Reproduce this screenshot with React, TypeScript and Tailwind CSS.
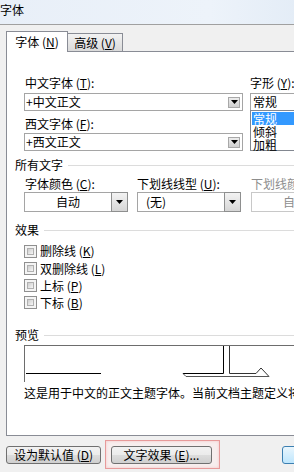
import type { ReactNode } from "react";

function Arrow({ color = "#000" }: { color?: string }) {
  return (
    <svg width="7" height="4" viewBox="0 0 7 4">
      <path d="M0 0h7L3.5 4z" fill={color} />
    </svg>
  );
}

function Label({ children, className = "" }: { children: ReactNode; className?: string }) {
  return <div className={"h-[16px] leading-[16px] whitespace-nowrap " + className}>{children}</div>;
}

function FontInput({ value, className = "" }: { value: string; className?: string }) {
  return (
    <div className={"flex h-[18px] items-center border border-[#a5a5a5] bg-white " + className}>
      <span className="flex-1 pl-[1px] leading-none">{value}</span>
      <div className="mr-[2px] flex h-[11px] w-[12px] items-center justify-center border border-[#a8a8a8] bg-[linear-gradient(#ececec,#cfcfcf)]">
        <Arrow />
      </div>
    </div>
  );
}

function Combo({ value, center, disabled }: { value: string; center?: boolean; disabled?: boolean }) {
  return (
    <div className="flex h-[20px]">
      <div
        className={
          "flex flex-1 items-center border border-r-0 bg-white leading-none " +
          (center ? "justify-center " : "pl-[8px] ") +
          (disabled ? "border-[#c8c8c8] text-[#8d8d8d]" : "border-[#a5a5a5]")
        }
      >
        {value}
      </div>
      <div
        className={
          "flex w-[17px] items-center justify-center border " +
          (disabled
            ? "border-[#c8c8c8] bg-[#f4f4f4]"
            : "border-[#8e8f8f] bg-[linear-gradient(#f3f3f3,#d6d6d6)]")
        }
      >
        <Arrow color={disabled ? "#a0a0a0" : "#000"} />
      </div>
    </div>
  );
}

function Group({ title, className = "" }: { title: string; className?: string }) {
  return (
    <div className={"flex h-[14px] items-center pl-[8px] " + className}>
      <span className="leading-[14px]">{title}</span>
      <div className="ml-[5px] h-px flex-1 bg-[#dcdcdc]" />
    </div>
  );
}

function Checkbox() {
  return (
    <div className="h-[13px] w-[13px] border border-[#8f8f8f] bg-[#f4f4f4] p-[2px]">
      <div className="h-full w-full border border-[#b0b0b0] bg-[linear-gradient(135deg,#cdcdcd,#f6f6f6)]" />
    </div>
  );
}

function Btn({ children, className = "" }: { children: ReactNode; className?: string }) {
  return (
    <div
      className={
        "flex h-[18px] items-center justify-center whitespace-nowrap rounded-[3px] border border-[#707070] bg-[linear-gradient(#f2f2f2_0%,#ebebeb_50%,#dddddd_50%,#cfcfcf_100%)] leading-none " +
        className
      }
    >
      {children}
    </div>
  );
}

const effects = [
  { t: "删除线", k: "K" },
  { t: "双删除线", k: "L" },
  { t: "上标", k: "P" },
  { t: "下标", k: "B" },
];

export default function App() {
  return (
    <div className="h-[472px] w-[294px] overflow-hidden bg-[#f0f0f0] font-['Noto_Sans_CJK_SC','Noto_Sans',sans-serif] text-[12px] text-black">
      <div className="w-[420px]">
        {/* title bar */}
        <div className="h-[25px] border-b border-[#a0a0a0] bg-[linear-gradient(90deg,#e8eff8,#edf3fa_50%,#d6e3f1)] leading-[20px]">
          字体
        </div>

        {/* tabs */}
        <div className="flex h-[26px] items-end pl-[6px]">
          <div className="relative z-10 -mb-px flex h-[21px] w-[62px] items-center justify-center border border-b-0 border-[#898c95] bg-white">
            字体 (<u>N</u>)
          </div>
          <div className="flex h-[18px] w-[55px] items-center justify-center border border-b-0 border-l-0 border-[#898c95] bg-[linear-gradient(#f2f2f2,#dadada)]">
            高级 (<u>V</u>)
          </div>
        </div>

        {/* panel */}
        <div className="ml-[6px] h-[385px] w-[400px] border border-[#898c95] bg-white">
          <div className="mt-[23px] flex pl-[17px]">
            <div className="w-[219px] shrink-0">
              <Label className="pl-[1px]">
                中文字体 (<u>T</u>):
              </Label>
              <FontInput className="mt-[2px]" value="+中文正文" />
              <Label className="mt-[5px] pl-[1px]">
                西文字体 (<u>F</u>):
              </Label>
              <FontInput className="mt-[1px]" value="+西文正文" />
            </div>
            <div className="ml-[7px] w-[80px] shrink-0">
              <Label>
                字形 (<u>Y</u>):
              </Label>
              <div className="mt-[2px] flex h-[18px] items-center border border-[#a5a5a5] pl-[2px] leading-none">
                常规
              </div>
              <div className="-mt-px h-[41px] border border-[#828790] bg-white p-px leading-[13px]">
                <div className="h-[13px] bg-[#3399ff] pl-[1px] text-white">常规</div>
                <div className="h-[13px] pl-[1px]">倾斜</div>
                <div className="h-[13px] pl-[1px]">加粗</div>
              </div>
            </div>
          </div>

          <Group title="所有文字" className="mt-[7px]" />
          <div className="mt-[4px] flex pl-[17px]">
            <div className="w-[104px] shrink-0">
              <Label className="pl-[1px]">
                字体颜色 (<u>C</u>):
              </Label>
              <Combo value="自动" center />
            </div>
            <div className="ml-[9px] w-[104px] shrink-0">
              <Label>
                下划线线型 (<u>U</u>):
              </Label>
              <Combo value="(无)" />
            </div>
            <div className="ml-[10px] w-[104px] shrink-0">
              <Label className="text-[#8d8d8d]">
                下划线颜色 (<u>I</u>):
              </Label>
              <Combo value="自动" center disabled />
            </div>
          </div>

          <Group title="效果" className="mt-[11px]" />
          <div className="mt-[5px] pl-[17px]">
            {effects.map((e, i) => (
              <div key={e.t} className={(i === 0 ? "h-[18px] " : "h-[17px] ") + "flex items-center"}>
                <Checkbox />
                <span className="ml-[3px] leading-none">
                  {e.t} (<u>{e.k}</u>)
                </span>
              </div>
            ))}
          </div>

          <Group title="预览" className="mt-[17px]" />
          <div className="ml-[17px] mt-[3px] h-[37px] border border-b-0 border-[#6d6d6d]">
            <svg width="320" height="36" viewBox="0 0 320 36" fill="none">
              <path d="M1 27.5H76" stroke="#000" />
              <path d="M158 27.5H198.5V0" stroke="#000" />
              <path d="M204.5 0V27.5H231L236 22L244 30.5" stroke="#333" />
              <path d="M158 27.5L161 30.5H244" stroke="#555" />
            </svg>
          </div>
          <div className="mt-[4px] whitespace-nowrap pl-[17px] leading-[14px]">
            这是用于中文的正文主题字体。当前文档主题定义将使用哪种字体。
          </div>
        </div>

        {/* buttons */}
        <div className="mt-[4px] flex items-start pl-[6px]">
          <Btn className="mt-[6px] w-[95px] shrink-0">
            设为默认值 (<u>D</u>)
          </Btn>
          <div className="ml-[4px] h-[29px] w-[115px] shrink-0 border border-[#e79a9a] bg-[#f7eeee] pl-[5px] pt-[5px] shadow-[inset_0_0_3px_#f3c4c4]">
            <Btn className="w-[101px]">
              文字效果 (<u>E</u>)...
            </Btn>
          </div>
          <div className="ml-[62px] mt-[6px] h-[18px] w-[70px] shrink-0 rounded-[3px] border border-[#3c7fb1] bg-[linear-gradient(#eaf6fd,#bee6fd)]" />
        </div>
      </div>
    </div>
  );
}
